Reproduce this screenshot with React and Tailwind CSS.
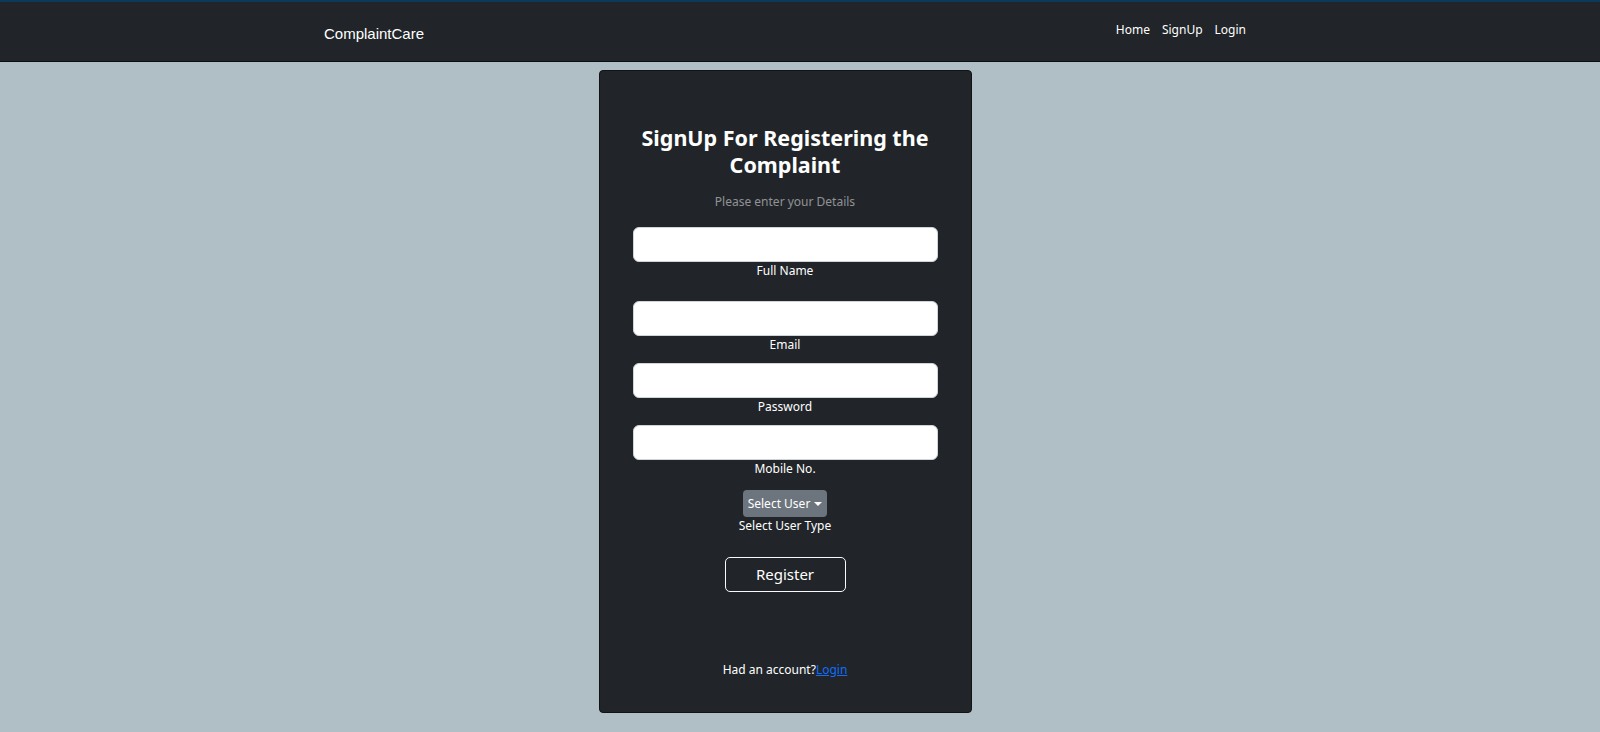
import React, { useState } from "react";

const font = { fontFamily: '"Noto Sans", "Open Sans", sans-serif' };

const Field = ({ label, type = "text", value, onChange, className = "" }) => (
  <div className={`flex flex-col items-center ${className}`}>
    <input
      type={type}
      value={value}
      onChange={onChange}
      className="w-full h-[35px] rounded-[6px] border border-[#ced4da] bg-white px-3 text-[15px] text-gray-900 outline-none"
    />
    <label className="text-[12px] leading-[18px] text-white">{label}</label>
  </div>
);

const App = () => {
  const [form, setForm] = useState({ name: "", email: "", password: "", mobile: "" });
  const set = (k) => (e) => setForm({ ...form, [k]: e.target.value });

  return (
    <div className="min-h-[732px] bg-[#b0bec5]" style={font}>
      {/* Navbar */}
      <nav className="h-[62px] bg-[#212529] border-t-2 border-t-[#0c3a5b] border-b border-b-[#0b0c0d]">
        <div className="ml-[324px] w-[922px] h-full flex items-center justify-between">
          <a
            href="#"
            className="text-[15px] text-white mt-[5px]"
            style={{ fontFamily: '"Liberation Sans", Arial, sans-serif' }}
          >
            ComplaintCare
          </a>
          <ul className="flex items-center -mt-[7px]">
            <li><a href="#" className="px-[6px] text-[12px] text-white">Home</a></li>
            <li><a href="#" className="px-[6px] text-[12px] text-white">SignUp</a></li>
            <li><a href="#" className="pl-[6px] text-[12px] text-white">Login</a></li>
          </ul>
        </div>
      </nav>

      {/* Card */}
      <div className="ml-[324px] w-[922px] pt-[8px]">
        <div className="mx-auto w-[373px] h-[643px] rounded-[4px] border border-[#111315] bg-[#212529] px-[33px] pt-[53px] flex flex-col">
          <h3 className="text-center text-[21.5px] leading-[27px] font-bold text-white">
            SignUp For Registering the
            <br />
            Complaint
          </h3>
          <p className="mt-[15px] text-center text-[12px] leading-[18px] text-white/50">
            Please enter your Details
          </p>

          <Field className="mt-[16px]" label="Full Name" value={form.name} onChange={set("name")} />
          <Field className="mt-[21px]" label="Email" type="email" value={form.email} onChange={set("email")} />
          <Field className="mt-[9px]" label="Password" type="password" value={form.password} onChange={set("password")} />
          <Field className="mt-[9px]" label="Mobile No." value={form.mobile} onChange={set("mobile")} />

          <div className="mt-[12px] flex flex-col items-center">
            <button className="h-[27px] w-[84px] rounded-[4px] bg-[#6c757d] text-[12px] text-white flex items-center justify-center gap-[4px]">
              Select User
              <span className="inline-block w-0 h-0 border-l-[4px] border-r-[4px] border-t-[4px] border-l-transparent border-r-transparent border-t-white" />
            </button>
            <span className="text-[12px] leading-[18px] text-white">Select User Type</span>
          </div>

          <div className="mt-[22px] flex justify-center">
            <button className="h-[35px] w-[121px] rounded-[5px] border border-[#f8f9fa] text-[15px] text-white">
              Register
            </button>
          </div>

          <p className="mt-[69px] text-center text-[12px] leading-[18px] text-white">
            Had an account?
            <a href="#" className="text-[#0d6efd] underline">Login</a>
          </p>
        </div>
      </div>
    </div>
  );
};

export default App;
